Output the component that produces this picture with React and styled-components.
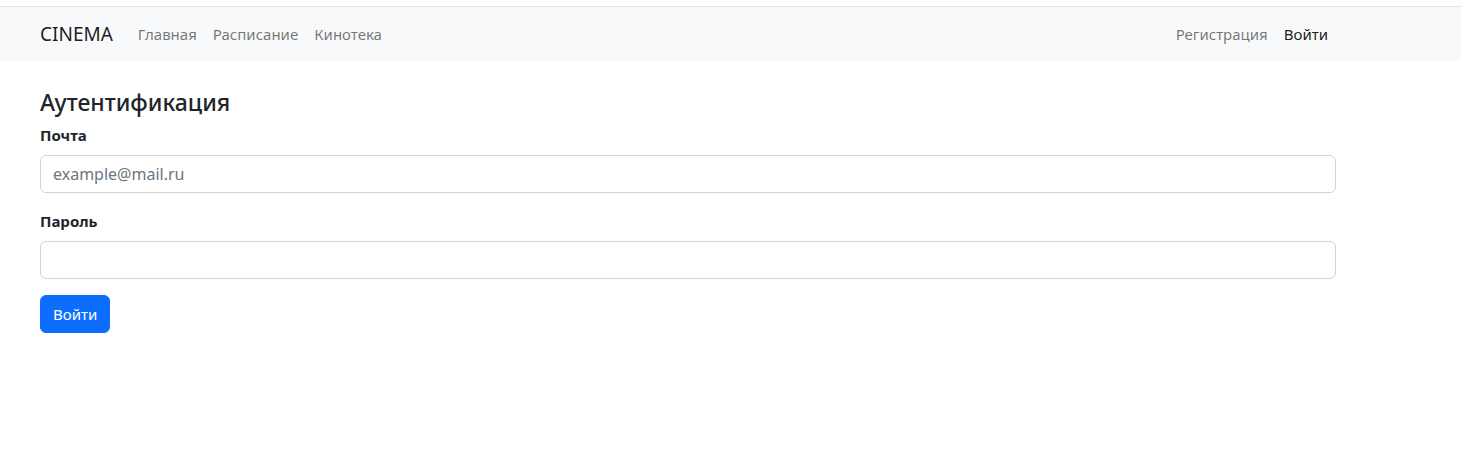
import React from "react";
import styled, { createGlobalStyle } from "styled-components";

const Global = createGlobalStyle`
  * { box-sizing: border-box; }
  body {
    margin: 0;
    background: #fff;
    color: #212529;
    font-family: "Noto Sans", "Open Sans", sans-serif;
    font-size: 15px;
    line-height: 24px;
  }
`;

const Page = styled.div`
  padding-top: 6px;
`;

const Navbar = styled.nav`
  background: #f8f9fa;
  border-top: 1px solid #dfe1e4;
  height: 55px;
  display: flex;
  align-items: center;
`;

const Container = styled.div`
  width: 1320px;
  margin-left: 28px;
  padding: 0 12px;
`;

const NavInner = styled(Container)`
  display: flex;
  align-items: center;
  margin-top: -1px;
`;

const Brand = styled.a`
  font-size: 19px;
  color: rgba(0, 0, 0, 0.9);
  text-decoration: none;
  margin-right: 17px;
  line-height: 30px;
`;

const NavList = styled.div`
  display: flex;
  align-items: center;
  margin-left: ${(p) => (p.$right ? "auto" : "0")};
`;

const NavLink = styled.a`
  padding: 8px;
  color: ${(p) => (p.$active ? "rgba(0,0,0,0.9)" : "rgba(0,0,0,0.55)")};
  text-decoration: none;
  font-size: 15px;
`;

const Main = styled(Container)`
  padding-top: 27px;
`;

const Title = styled.h4`
  margin: 0 0 7px;
  font-size: 23px;
  font-weight: 500;
  line-height: 28px;
`;

const Field = styled.div`
  margin-bottom: 16px;
`;

const Label = styled.label`
  display: block;
  font-weight: 700;
  margin-bottom: 8px;
`;

const Input = styled.input`
  display: block;
  width: 100%;
  height: 38px;
  padding: 6px 12px;
  font: inherit;
  font-size: 16px;
  color: #212529;
  background: #fff;
  border: 1px solid #ced4da;
  border-radius: 6px;
  outline: none;
  &::placeholder {
    color: #6c757d;
  }
`;

const Button = styled.button`
  height: 38px;
  padding: 6px 12px;
  font: inherit;
  font-size: 15px;
  color: #fff;
  background: #0d6efd;
  border: 1px solid #0d6efd;
  border-radius: 6px;
`;

export default function App() {
  return (
    <Page>
      <Global />
      <Navbar>
        <NavInner>
          <Brand href="#">CINEMA</Brand>
          <NavList>
            <NavLink href="#">Главная</NavLink>
            <NavLink href="#">Расписание</NavLink>
            <NavLink href="#">Кинотека</NavLink>
          </NavList>
          <NavList $right>
            <NavLink href="#">Регистрация</NavLink>
            <NavLink href="#" $active>Войти</NavLink>
          </NavList>
        </NavInner>
      </Navbar>
      <Main>
        <Title>Аутентификация</Title>
        <Field>
          <Label>Почта</Label>
          <Input placeholder="example@mail.ru" />
        </Field>
        <Field>
          <Label>Пароль</Label>
          <Input type="password" />
        </Field>
        <Button>Войти</Button>
      </Main>
    </Page>
  );
}
